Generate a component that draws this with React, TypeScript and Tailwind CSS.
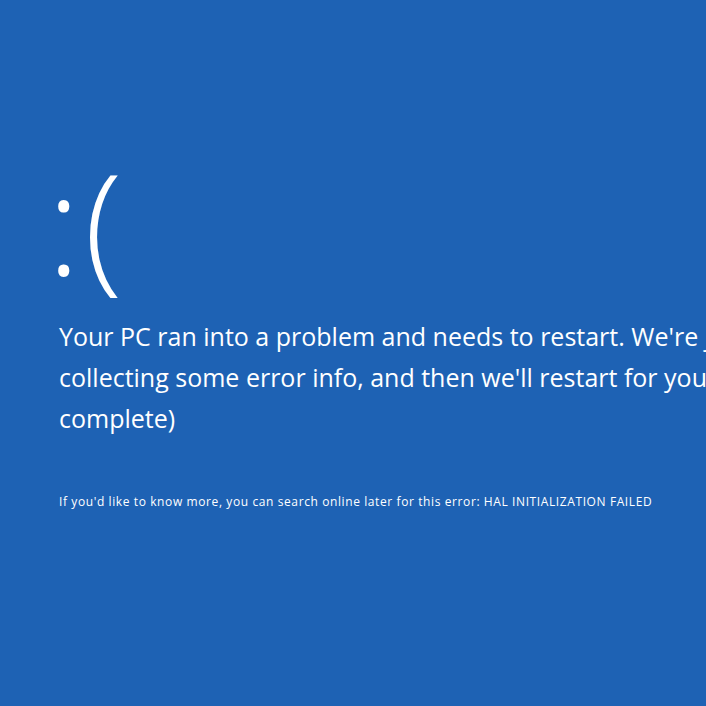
export default function App() {
  return (
    <div
      className="w-[706px] h-[706px] overflow-hidden bg-[#1e62b4] text-white flex flex-col pl-[59px]"
      style={{ fontFamily: '"Open Sans", "Noto Sans", sans-serif' }}
    >
      <div className="h-[147px] shrink-0" />
      <div className="text-[140px] leading-[150px] font-light h-[150px] ml-[-12px] tracking-[4px] whitespace-nowrap">:(</div>
      <div className="h-[19px] shrink-0" />
      <div className="text-[25px] leading-[41px] font-normal whitespace-nowrap">
        <div>Your PC ran into a problem and needs to restart. We're just</div>
        <div>collecting some error info, and then we'll restart for you. (0%</div>
        <div>complete)</div>
      </div>
      <div className="h-[55px] shrink-0" />
      <div className="text-[12px] leading-[16px] tracking-[0.6px] whitespace-nowrap">
        If you'd like to know more, you can search online later for this error: HAL INITIALIZATION FAILED
      </div>
    </div>
  );
}
